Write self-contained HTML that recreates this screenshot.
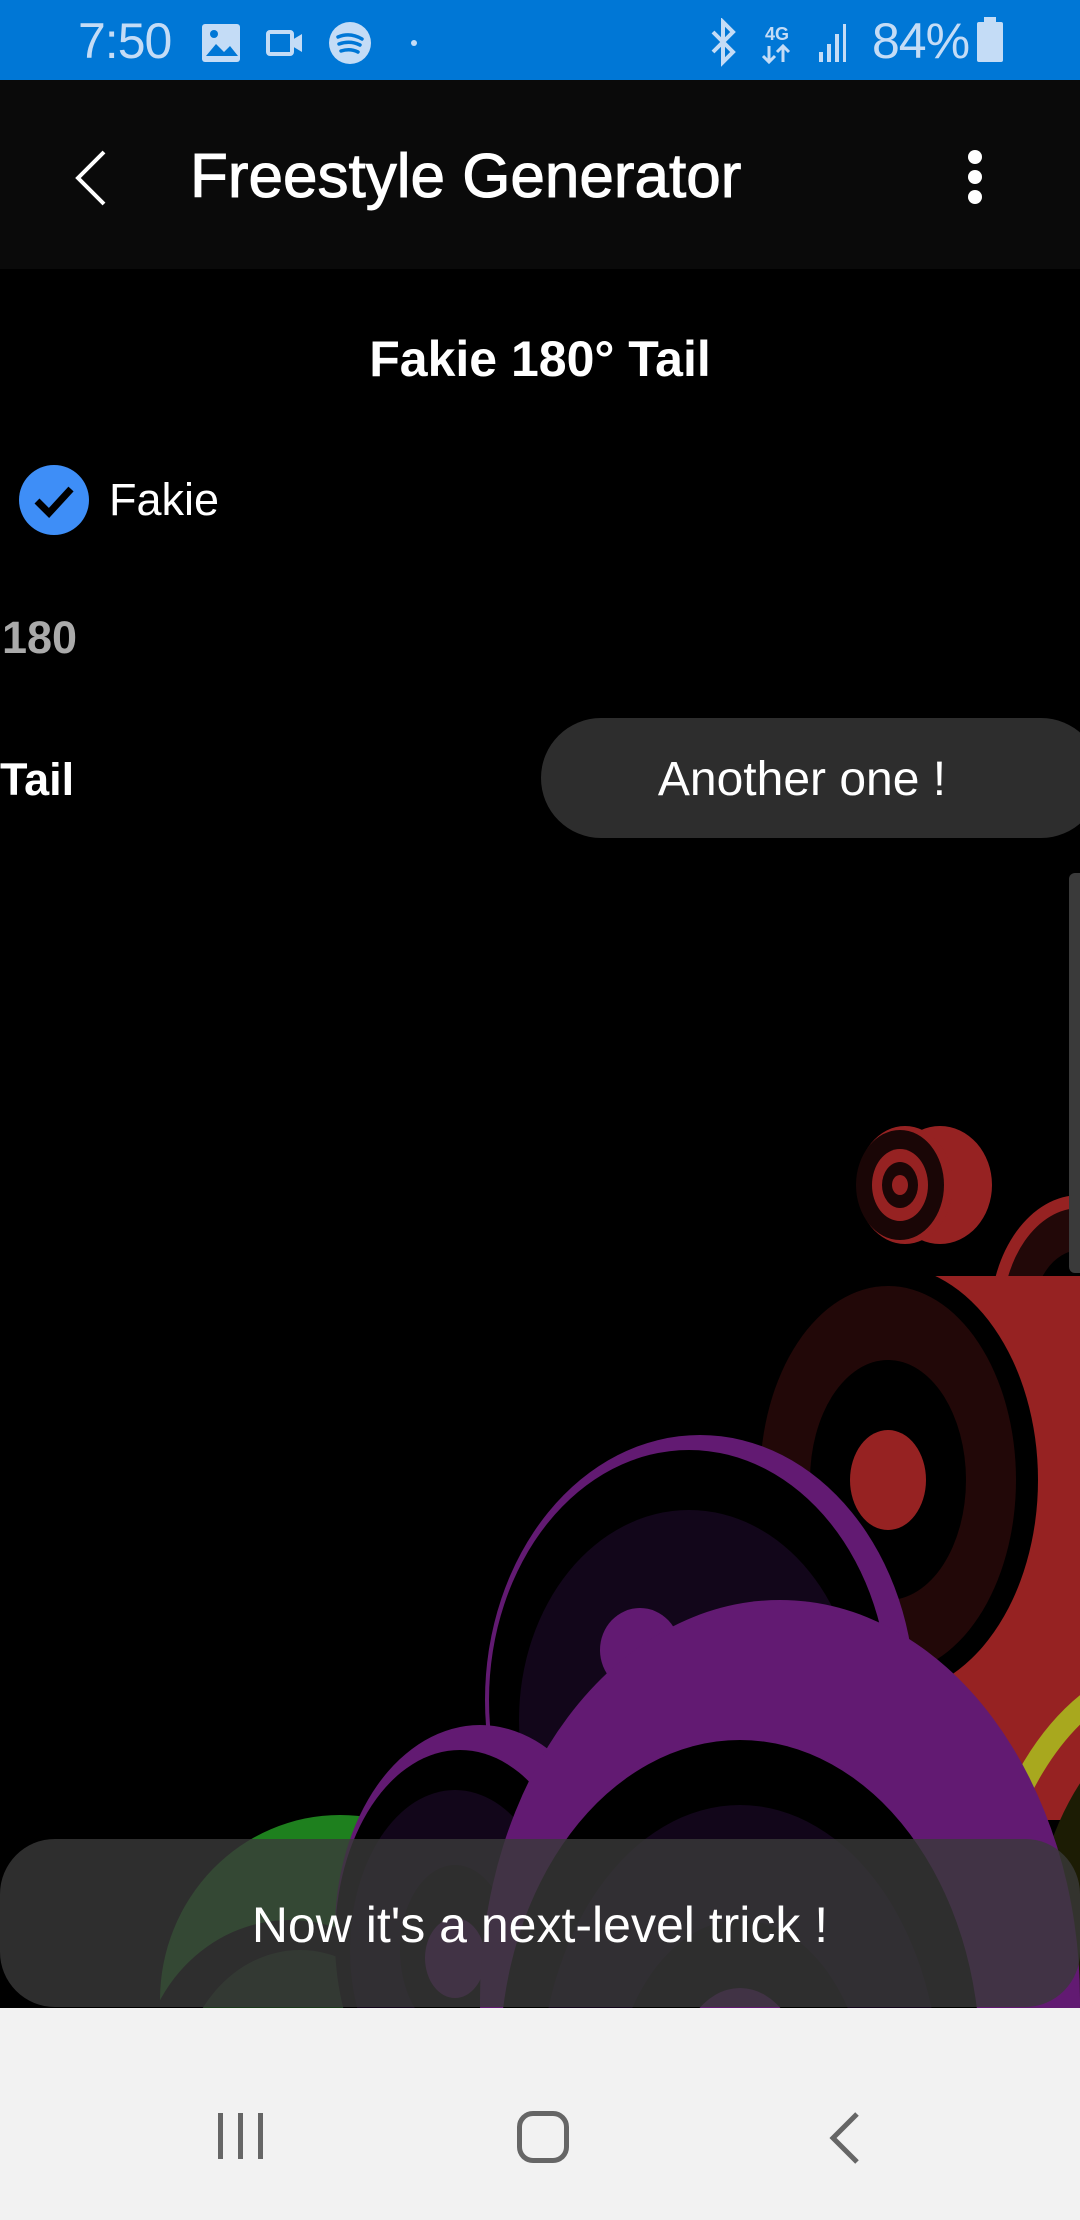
<!DOCTYPE html>
<html><head><meta charset="utf-8"><style>
*{margin:0;padding:0;box-sizing:border-box}
html,body{width:1080px;height:2220px;overflow:hidden}
body{background:#000;position:relative;font-family:"Liberation Sans",sans-serif;color:#fff}
.abs{position:absolute}
</style></head><body>
<div class="abs" style="left:0;top:0;width:1080px;height:80px;background:#0077d6"></div>
<div class="abs" style="left:78px;top:12px;font-size:50px;line-height:58px;color:#c4dcf6;letter-spacing:-1px">7:50</div>
<svg class="abs" style="left:200px;top:22px" width="220" height="42" viewBox="0 0 220 42">
<rect x="2" y="2" width="38" height="38" rx="3" fill="#c4dcf6"/><path d="M6 34 L16 22 L24 30 L30 24 L38 34Z" fill="#0077d6"/><circle cx="14" cy="12" r="4" fill="#0077d6"/>
<rect x="68" y="10" width="24" height="22" rx="2" fill="none" stroke="#c4dcf6" stroke-width="4"/><path d="M92 18 L102 12 L102 30 L92 24Z" fill="#c4dcf6"/>
<circle cx="150" cy="21" r="21" fill="#c4dcf6"/><path d="M138 15 Q150 10 162 17 M139 22 Q150 18 160 23 M141 29 Q150 26 158 30" stroke="#0077d6" stroke-width="3.5" fill="none" stroke-linecap="round"/>
<circle cx="214" cy="21" r="3" fill="#c4dcf6"/></svg>
<svg class="abs" style="left:705px;top:18px" width="150" height="50" viewBox="0 0 150 50">
<path d="M8 14 L28 34 L18 44 L18 4 L28 14 L8 34" stroke="#c4dcf6" stroke-width="4" fill="none"/>
<text x="60" y="22" font-size="18" font-weight="bold" fill="#c4dcf6" font-family="Liberation Sans">4G</text>
<path d="M64 28 L64 44 M58 38 L64 44 L70 38 M78 44 L78 28 M72 34 L78 28 L84 34" stroke="#c4dcf6" stroke-width="3" fill="none"/>
<rect x="114" y="34" width="4" height="10" fill="#c4dcf6"/><rect x="122" y="26" width="4" height="18" fill="#c4dcf6"/><rect x="130" y="16" width="4" height="28" fill="#c4dcf6"/><rect x="138" y="6" width="3" height="38" fill="#c4dcf6"/>
</svg>
<div class="abs" style="left:872px;top:12px;font-size:50px;line-height:58px;color:#c4dcf6;letter-spacing:-1px">84%</div>
<div class="abs" style="left:977px;top:22px;width:26px;height:40px;background:#c4dcf6;border-radius:2px"></div>
<div class="abs" style="left:984px;top:17px;width:12px;height:6px;background:#c4dcf6"></div>

<div class="abs" style="left:0;top:80px;width:1080px;height:189px;background:#0a0a0a"></div>
<svg class="abs" style="left:70px;top:148px" width="40" height="60"><path d="M34 4 L8 30 L34 56" stroke="#fff" stroke-width="4" fill="none"/></svg>
<div class="abs" style="left:190px;top:142px;font-size:62px;line-height:70px;-webkit-text-stroke:1px #fff">Freestyle Generator</div>
<div class="abs" style="left:968px;top:150px;width:14px;height:14px;border-radius:50%;background:#fff"></div>
<div class="abs" style="left:968px;top:170px;width:14px;height:14px;border-radius:50%;background:#fff"></div>
<div class="abs" style="left:968px;top:190px;width:14px;height:14px;border-radius:50%;background:#fff"></div>

<div class="abs" style="left:0;top:330px;width:1080px;text-align:center;font-size:50px;line-height:58px;font-weight:bold">Fakie 180° Tail</div>
<svg class="abs" style="left:18px;top:464px" width="72" height="72"><circle cx="36" cy="36" r="35" fill="#3e8ef7"/><path d="M19 37 L31 49 L53 25" stroke="#000" stroke-width="7" fill="none"/></svg>
<div class="abs" style="left:109px;top:474px;font-size:45px;line-height:52px">Fakie</div>
<div class="abs" style="left:2px;top:612px;font-size:45px;line-height:52px;font-weight:bold;color:#aaa">180</div>
<div class="abs" style="left:0;top:754px;font-size:45px;line-height:52px;font-weight:bold">Tail</div>
<div class="abs" style="left:541px;top:718px;width:560px;height:120px;background:#2d2d2d;border-radius:60px"></div>
<div class="abs" style="left:541px;top:752px;width:522px;text-align:center;font-size:48px;line-height:56px">Another one !</div>

<svg class="abs" style="left:0;top:1100px" width="1080" height="908" viewBox="0 1100 1080 908">
<ellipse cx="940" cy="1185" rx="52" ry="59" fill="#962222"/>
<ellipse cx="905" cy="1185" rx="48" ry="59" fill="#962222"/>
<ellipse cx="900" cy="1185" rx="44" ry="55" fill="#1a0606"/>
<ellipse cx="900" cy="1185" rx="28" ry="36" fill="#962222"/>
<ellipse cx="900" cy="1185" rx="18" ry="23" fill="#1a0606"/>
<ellipse cx="900" cy="1185" rx="8" ry="10" fill="#962222"/>
<ellipse cx="1080" cy="1320" rx="90" ry="125" fill="#962222"/>
<ellipse cx="1080" cy="1320" rx="78" ry="112" fill="#220808"/>
<ellipse cx="1080" cy="1320" rx="48" ry="70" fill="#000"/>
<ellipse cx="1075" cy="1320" rx="22" ry="32" fill="#962222"/>
<path d="M736 1580 C736 1390 800 1276 920 1276 L1080 1276 L1080 1820 L736 1820Z" fill="#962222"/>
<ellipse cx="888" cy="1480" rx="150" ry="215" fill="#000"/>
<ellipse cx="888" cy="1480" rx="128" ry="194" fill="#220808"/>
<ellipse cx="888" cy="1480" rx="78" ry="120" fill="#000"/>
<ellipse cx="888" cy="1480" rx="38" ry="50" fill="#962222"/>
<ellipse cx="1175" cy="2000" rx="200" ry="330" fill="none" stroke="#a8a81e" stroke-width="22"/>
<ellipse cx="1175" cy="2000" rx="150" ry="280" fill="#1c1c04"/>
<ellipse cx="700" cy="1700" rx="215" ry="265" fill="#621a72"/>
<ellipse cx="689" cy="1700" rx="200" ry="250" fill="#000"/>
<ellipse cx="689" cy="1720" rx="170" ry="210" fill="#12061a"/>
<ellipse cx="340" cy="2000" rx="180" ry="185" fill="#1e801e"/>
<ellipse cx="290" cy="2080" rx="150" ry="160" fill="#000"/>
<ellipse cx="300" cy="2090" rx="120" ry="140" fill="#1b3a1b"/>
<ellipse cx="480" cy="1930" rx="145" ry="205" fill="#621a72"/>
<ellipse cx="460" cy="1940" rx="125" ry="190" fill="#000"/>
<ellipse cx="455" cy="1950" rx="105" ry="160" fill="#12061a"/>
<ellipse cx="455" cy="1950" rx="55" ry="85" fill="#000"/>
<ellipse cx="455" cy="1958" rx="30" ry="40" fill="#621a72"/>
<ellipse cx="640" cy="1650" rx="40" ry="42" fill="#621a72"/>
<ellipse cx="780" cy="2000" rx="300" ry="400" fill="#621a72"/>
<ellipse cx="740" cy="2060" rx="240" ry="320" fill="#000"/>
<ellipse cx="740" cy="2090" rx="200" ry="285" fill="#12061a"/>
<ellipse cx="740" cy="2120" rx="130" ry="200" fill="#000"/>
<ellipse cx="740" cy="2080" rx="65" ry="92" fill="#621a72"/>
</svg>
<div class="abs" style="left:1069px;top:873px;width:11px;height:400px;background:#3a3a3a;border-radius:6px 0 0 6px"></div>

<div class="abs" style="left:0;top:1839px;width:1080px;height:168px;background:rgba(58,58,58,0.8);border-radius:55px"></div>
<div class="abs" style="left:0;top:1896px;width:1080px;text-align:center;font-size:50px;line-height:58px">Now it's a next-level trick !</div>

<div class="abs" style="left:0;top:2008px;width:1080px;height:212px;background:#f2f2f2"></div>
<div class="abs" style="left:218px;top:2113px;width:5px;height:46px;background:#666"></div>
<div class="abs" style="left:238px;top:2113px;width:5px;height:46px;background:#666"></div>
<div class="abs" style="left:258px;top:2113px;width:5px;height:46px;background:#666"></div>
<div class="abs" style="left:517px;top:2111px;width:52px;height:52px;border:5px solid #666;border-radius:16px"></div>
<svg class="abs" style="left:825px;top:2110px" width="40" height="56"><path d="M32 4 L8 28 L32 52" stroke="#666" stroke-width="5" fill="none"/></svg>
</body></html>
